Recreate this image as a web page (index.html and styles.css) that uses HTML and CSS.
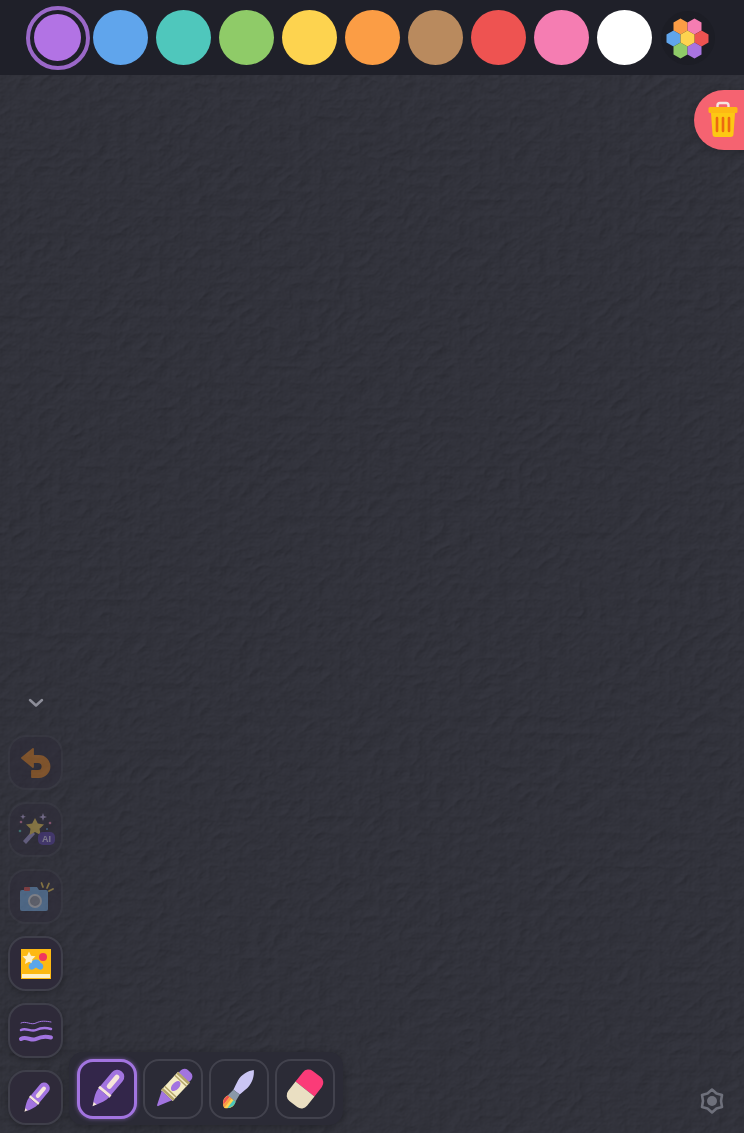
FILE: index.html
```html
<!DOCTYPE html>
<html lang="en">
<head>
  <meta charset="UTF-8">
  <meta name="viewport" content="width=device-width, initial-scale=1.0">
  <title>Drawing Pad</title>
  <link rel="stylesheet" href="styles.css">
</head>
<body>
  <!-- paper texture -->
  <svg class="paper" width="744" height="1133" aria-hidden="true">
    <filter id="grain" x="0" y="0" width="100%" height="100%" color-interpolation-filters="sRGB">
      <feTurbulence type="turbulence" baseFrequency="0.05 0.06" numOctaves="5" seed="11" result="noise"/>
      <feDiffuseLighting in="noise" surfaceScale="0.65" diffuseConstant="1" lighting-color="#393a44">
        <feDistantLight azimuth="45" elevation="60"/>
      </feDiffuseLighting>
    </filter>
    <rect width="744" height="1133" filter="url(#grain)"/>
  </svg>

  <!-- shared icons -->
  <svg class="defs" width="0" height="0" aria-hidden="true">
    <symbol id="pen" viewBox="0 0 60 60">
      <g transform="rotate(40 30 30)">
        <path d="M23 14a7 7 0 0 1 14 0v19H23z" fill="#a274e0"/>
        <rect x="27.500" y="12" width="5" height="17" rx="2.500" fill="#f6e6da"/>
        <rect x="22.500" y="32" width="15" height="3" fill="#f6e6da"/>
        <path d="M23 35h14c0 5-3 10-5 14h-4c-2-4-5-9-5-14z" fill="#a274e0"/>
        <path d="M28 48.500h4l-2 4z" fill="#f6e6da"/>
      </g>
    </symbol>
  </svg>

  <header class="palette">
    <div class="swatch-cell"><div class="swatch-ring"><span class="swatch swatch-small purple"></span></div></div>
    <div class="swatch-cell"><span class="swatch blue"></span></div>
    <div class="swatch-cell"><span class="swatch teal"></span></div>
    <div class="swatch-cell"><span class="swatch green"></span></div>
    <div class="swatch-cell"><span class="swatch yellow"></span></div>
    <div class="swatch-cell"><span class="swatch orange"></span></div>
    <div class="swatch-cell"><span class="swatch brown"></span></div>
    <div class="swatch-cell"><span class="swatch red"></span></div>
    <div class="swatch-cell"><span class="swatch pink"></span></div>
    <div class="swatch-cell"><span class="swatch white"></span></div>
    <div class="swatch-cell">
      <svg class="more-colors" width="56" height="56" viewBox="0 0 56 56">
        <circle cx="28" cy="28" r="27" fill="#1c1d25"/>
        <g transform="translate(27.500 28.500)">
          <polygon points="-7,-16 0,-20 7,-16 7,-8 0,-4 -7,-8" transform="translate(-7 0)" fill="#fb9d45"/>
          <polygon points="-7,-16 0,-20 7,-16 7,-8 0,-4 -7,-8" transform="translate(7 0)" fill="#f57db2"/>
          <polygon points="-7,-4 0,-8 7,-4 7,4 0,8 -7,4" transform="translate(-14 0)" fill="#60a5ec"/>
          <polygon points="-7,-4 0,-8 7,-4 7,4 0,8 -7,4" transform="translate(14 0)" fill="#ee5351"/>
          <polygon points="-7,8 0,4 7,8 7,16 0,20 -7,16" transform="translate(-7 0)" fill="#8fcb68"/>
          <polygon points="-7,8 0,4 7,8 7,16 0,20 -7,16" transform="translate(7 0)" fill="#a974e0"/>
          <polygon points="-7,-4 0,-8 7,-4 7,4 0,8 -7,4" fill="#fdd34f"/>
        </g>
      </svg>
    </div>
  </header>

  <button class="trash-btn">
    <svg width="30" height="38" viewBox="0 0 30 38">
      <path d="M9.500 7V4.500a2.500 2.500 0 0 1 2.500-2.500h6a2.500 2.500 0 0 1 2.500 2.500V7" fill="none" stroke="#f5e6e0" stroke-width="2.400"/>
      <rect x="0.500" y="6" width="29" height="6" rx="1.500" fill="#fdb913"/>
      <path d="M3 12h24l-1.500 21a3 3 0 0 1-3 3h-15a3 3 0 0 1-3-3z" fill="#fdc813"/>
      <path d="M9 17v13M15 17v13M21 17v13" stroke="#ec6a10" stroke-width="2.600" stroke-linecap="round"/>
    </svg>
  </button>

  <div class="dock">
    <div class="side-tools">
      <svg class="chevron" width="18" height="10" viewBox="0 0 18 10"><path d="M3 2l6 5.500L15 2" fill="none" stroke="#8d8e99" stroke-width="2.500" stroke-linecap="round" stroke-linejoin="round"/></svg>

      <button class="side-btn disabled">
        <svg width="36" height="36" viewBox="0 0 36 36">
          <path d="M15 4L4 13l11 9v-5h5a4.500 4.500 0 0 1 0 9h-6v6h7a10.500 10.500 0 0 0 0-21h-6z" fill="#f08518" stroke="#f08518" stroke-linejoin="round" stroke-width="1.800"/>
        </svg>
      </button>

      <button class="side-btn disabled">
        <svg width="44" height="44" viewBox="0 0 44 44">
          <path d="M9 33l9-10 3 3-9 10z" fill="#a99de0"/>
          <path d="M21 10l2.800 5.600 6.200.9-4.500 4.300 1.100 6.200-5.600-3-5.500 3 1-6.200-4.500-4.300 6.200-.9z" fill="#fdd34f"/>
          <path d="M29 5l1 3 3 1-3 1-1 3-1-3-3-1 3-1zM9 6l.8 2 2 .8-2 .8-.8 2-.8-2-2-.8 2-.8z" fill="#cdb8f2"/>
          <circle cx="7" cy="14" r="1.300" fill="#f57db2"/><circle cx="6" cy="23" r="1.300" fill="#4cc7bb"/>
          <circle cx="36" cy="15" r="1.300" fill="#f57db2"/><circle cx="33" cy="21" r="1" fill="#60a5ec"/>
          <rect x="24" y="24" width="17" height="13" rx="5" fill="#5b3fb0"/>
          <text x="32.500" y="34" class="ai-label">AI</text>
        </svg>
      </button>

      <button class="side-btn disabled">
        <svg width="40" height="40" viewBox="0 0 40 40">
          <path d="M6 13h5l2-3h8l2 3h7a2 2 0 0 1 2 2v17a2 2 0 0 1-2 2H6a2 2 0 0 1-2-2V15a2 2 0 0 1 2-2z" fill="#7ab6f2"/>
          <rect x="8" y="10" width="6" height="4" rx="1" fill="#ee5351"/>
          <circle cx="19" cy="24" r="6" fill="#9ba0ad" stroke="#eef0f5" stroke-width="2"/>
          <path d="M27 10l-1.500-4M31 11l2-4.500M33 14l4-2" stroke="#fdd34f" stroke-width="1.800" stroke-linecap="round"/>
        </svg>
      </button>

      <button class="side-btn">
        <svg width="34" height="34" viewBox="0 0 34 34">
          <rect x="2" y="2" width="30" height="30" fill="#fdb913"/>
          <rect x="3" y="27" width="28" height="4" fill="#fdf0c8"/>
          <path d="M10 4.500l2 4.200 4.500.6-3.300 3.200.8 4.500-4-2.200-4 2.200.8-4.500-3.300-3.200 4.500-.6z" fill="#fdf0c8"/>
          <circle cx="24" cy="10" r="4" fill="#f0355f"/>
          <path d="M17 12.500c3 0 4.500 2 4.500 3.500 3 .3 4 5 1 6.500-2 .5-3.500-.5-5.500-2-2 1.500-3.500 2.500-5.500 2-3-1.500-2-6.200 1-6.500 0-1.500 1.500-3.500 4.500-3.500z" fill="#5aa6ea"/>
        </svg>
      </button>

      <button class="side-btn">
        <svg width="36" height="36" viewBox="0 0 36 36" fill="none" stroke="#a274e0" stroke-linecap="round">
          <path d="M3 10c5-2.500 10 2.500 15 0s10-2 15-1" stroke-width="1"/>
          <path d="M3 17c5-3 10 2.500 15 0s10-2.500 15-1" stroke-width="2.500"/>
          <path d="M3 26c5-3.500 10 2.500 15 0s10-3 15-1.500" stroke-width="4"/>
        </svg>
      </button>

      <button class="side-btn">
        <svg width="48" height="48"><use href="#pen"/></svg>
      </button>
    </div>

    <div class="tray">
      <button class="tray-btn active">
        <svg width="60" height="60"><use href="#pen"/></svg>
      </button>

      <button class="tray-btn">
        <svg width="60" height="60" viewBox="0 0 60 60">
          <g transform="rotate(43 30 30)">
            <path d="M23 14v-3a5 5 0 0 1 5-5h4a5 5 0 0 1 5 5v3z" fill="#a274e0"/>
            <rect x="22" y="14" width="16" height="25" fill="#f4ecc4"/>
            <rect x="22" y="14" width="16" height="2.500" fill="#b3a468"/>
            <rect x="22" y="18" width="16" height="1.500" fill="#b3a468"/>
            <rect x="22" y="33" width="16" height="1.500" fill="#b3a468"/>
            <rect x="22" y="36" width="16" height="2.500" fill="#b3a468"/>
            <ellipse cx="30" cy="26" rx="3.500" ry="6" fill="#a274e0"/>
            <path d="M23 39h14l-6 13a1 1 0 0 1-2 0z" fill="#a274e0"/>
          </g>
        </svg>
      </button>

      <button class="tray-btn">
        <svg width="60" height="60" viewBox="0 0 60 60">
          <g transform="rotate(38 30 30)">
            <path d="M30 6c4 4 7 11 6 18-.5 3-1.500 7-2 10h-8c-.5-3-1.500-7-2-10-1-7 2-14 6-18z" fill="#cbc6f4"/>
            <path d="M26 34h8l1 8H25z" fill="#8a98a8"/>
            <path d="M25 42h10c2 4 1 9-5 12-6-3-7-8-5-12z" fill="#fdd34f"/>
            <path d="M25 42h2.500v10c-3-2-4-6-2.500-10z" fill="#ee5351"/>
            <path d="M27.500 42H30v12l-2.500-1.500z" fill="#fb9d45"/>
            <path d="M32.500 42H35c1.500 3 1 7-2.500 10z" fill="#4cc7bb"/>
          </g>
        </svg>
      </button>

      <button class="tray-btn">
        <svg width="60" height="60" viewBox="0 0 60 60">
          <g transform="rotate(38 30 30)">
            <path d="M18 30V18a7 7 0 0 1 7-7h10a7 7 0 0 1 7 7v12z" fill="#fb3b78"/>
            <path d="M18 30h24v12a7 7 0 0 1-7 7H25a7 7 0 0 1-7-7z" fill="#eadfc2"/>
          </g>
        </svg>
      </button>
    </div>
  </div>

  <button class="settings-btn">
    <svg width="28" height="28" viewBox="0 0 28 28">
      <path d="M14 2.500L18.500 6.500 24 8 23 14 24 20 18.500 21.500 14 25.500 9.500 21.500 4 20 5 14 4 8 9.500 6.500Z" fill="none" stroke="#6e707b" stroke-width="2.600" stroke-linejoin="round"/>
      <circle cx="14" cy="14" r="5" fill="#6e707b"/>
    </svg>
  </button>
</body>
</html>
```

FILE: styles.css
```css
html, body {
  margin: 0;
  height: 100%;
}
body {
  position: relative;
  width: 744px;
  height: 1133px;
  overflow: hidden;
  font-family: "Liberation Sans", Arial, sans-serif;
  background-color: #2f303c;
}
button {
  padding: 0;
  border: none;
  background: none;
  cursor: pointer;
}
svg {
  display: block;
}
.paper {
  position: absolute;
  top: 0;
  left: 0;
}
.defs {
  position: absolute;
}

/* colour bar */
.palette {
  position: relative;
  display: flex;
  align-items: center;
  box-sizing: border-box;
  height: 75px;
  padding-left: 26px;
  background-color: #1f2029;
}
.swatch-cell {
  display: flex;
  align-items: center;
  justify-content: center;
  width: 63px;
  height: 75px;
}
.swatch {
  display: block;
  width: 55px;
  height: 55px;
  border-radius: 50%;
}
.swatch-small {
  width: 47px;
  height: 47px;
}
.swatch-ring {
  display: flex;
  align-items: center;
  justify-content: center;
  flex: none;
  box-sizing: border-box;
  width: 64px;
  height: 64px;
  border: 4px solid #9a68c8;
  border-radius: 50%;
}
.purple { background-color: #b273e4; }
.blue { background-color: #60a5ec; }
.teal { background-color: #4fc7bc; }
.green { background-color: #8fcb68; }
.yellow { background-color: #fdd34f; }
.orange { background-color: #fb9d45; }
.brown { background-color: #b98a5e; }
.red { background-color: #ee5351; }
.pink { background-color: #f57db2; }
.white { background-color: #ffffff; }
.more-colors {
  flex: none;
}

/* trash */
.trash-btn {
  position: absolute;
  top: 90px;
  right: 0;
  display: flex;
  align-items: center;
  justify-content: flex-start;
  box-sizing: border-box;
  width: 50px;
  height: 60px;
  padding-left: 14px;
  border-radius: 30px 0 0 30px;
  background-color: #f56371;
  box-shadow: 0 2px 8px rgba(0, 0, 0, 0.2);
}

/* bottom dock */
.dock {
  position: absolute;
  left: 8px;
  bottom: 8px;
  display: flex;
  align-items: flex-end;
  gap: 6px;
}
.side-tools {
  display: flex;
  flex-direction: column;
  align-items: center;
  gap: 12px;
}
.chevron {
  margin-bottom: 15px;
}
.side-btn {
  display: flex;
  align-items: center;
  justify-content: center;
  box-sizing: border-box;
  width: 55px;
  height: 55px;
  border: 2px solid #3f3f4a;
  border-radius: 18px;
  background-color: #2e2a39;
  box-shadow: 0 2px 6px rgba(0, 0, 0, 0.25);
}
.side-btn.disabled {
  opacity: 0.4;
  box-shadow: none;
}
.ai-label {
  font-family: "Liberation Sans", Arial, sans-serif;
  font-size: 9px;
  font-weight: 700;
  fill: #e8e0ff;
  text-anchor: middle;
}
.tray {
  display: flex;
  gap: 6px;
  padding: 7px 8px 6px 8px;
  border-radius: 14px;
  background-color: #2b2b36;
  box-shadow: 0 2px 8px rgba(0, 0, 0, 0.25);
}
.tray-btn {
  box-sizing: border-box;
  display: flex;
  align-items: center;
  justify-content: center;
  width: 60px;
  height: 60px;
  border: 2px solid #42424d;
  border-radius: 16px;
}
.tray-btn svg {
  flex: none;
}
.tray-btn.active {
  border: 3px solid #a274e0;
  background-color: #33264a;
  box-shadow: 0 0 4px rgba(162, 116, 224, 0.6);
}
.settings-btn {
  position: absolute;
  right: 18px;
  bottom: 18px;
}
```
